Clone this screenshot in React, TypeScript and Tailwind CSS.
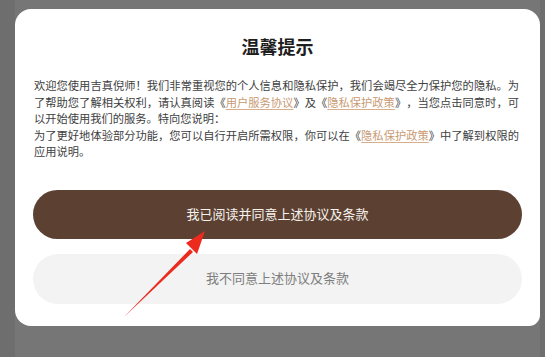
import React from "react";

const sans = "font-['Noto_Sans_CJK_SC','Noto_Sans',sans-serif]";
const serif = "font-['Liberation_Serif','Noto_Sans_CJK_SC',serif]";

const PolicyLink: React.FC<{ children: React.ReactNode }> = ({ children }) => (
  <>
    《<span className="text-[#c99a72] underline underline-offset-2 decoration-[#d6ae8c]">{children}</span>》
  </>
);

const App: React.FC = () => {
  return (
    <div className={`relative w-[545px] h-[357px] bg-[#767676] overflow-hidden ${sans}`}>
      <div className="absolute left-0 top-0 w-[15px] h-full bg-[#6e6e6e]" />
      <div className="absolute right-0 top-0 w-[5px] h-full bg-[#6e6e6e]" />

      <div className="relative ml-[15px] pt-[9px] w-[525px]">
        <div className="bg-white rounded-[16px] rounded-br-[11px] h-[317px] px-[18px] pt-[24px] pb-[22px] flex flex-col">
          <h2 className="text-center text-[18px] leading-[26px] font-bold text-[#1e1e1e]">温馨提示</h2>
          <p className="mt-[18px] ml-px mr-[3px] text-justify text-[11.25px] leading-[16.6px] text-[#404040] [text-spacing-trim:space-all]">
            欢迎您使用吉真倪师！我们非常重视您的个人信息和隐私保护，我们会竭尽全力保护您的隐私。为了帮助您了解相关权利，请认真阅读
            <PolicyLink>用户服务协议</PolicyLink>及<PolicyLink>隐私保护政策</PolicyLink>
            ，当您点击同意时，可以开始使用我们的服务。特向您说明：
            <br />
            为了更好地体验部分功能，您可以自行开启所需权限，你可以在<PolicyLink>隐私保护政策</PolicyLink>中了解到权限的应用说明。
          </p>
          <div className="mt-auto flex flex-col gap-[15px]">
            <button className={`h-[49px] rounded-full bg-[#5c4133] text-[#f6f1ec] text-[13px] ${serif}`}>
              我已阅读并同意上述协议及条款
            </button>
            <button className={`h-[50px] rounded-full bg-[#f2f3f2] text-[#7e7e7e] text-[13px] ${serif}`}>
              我不同意上述协议及条款
            </button>
          </div>
        </div>
      </div>

      {/* annotation arrow */}
      <svg className="absolute left-0 top-0 pointer-events-none" width="545" height="357" viewBox="0 0 545 357">
        <polygon points="124,317 190,249 193,252" fill="#ec2a1e" />
        <polygon points="205,231 186,243 197,254" fill="#ec2a1e" />
      </svg>
    </div>
  );
};

export default App;
